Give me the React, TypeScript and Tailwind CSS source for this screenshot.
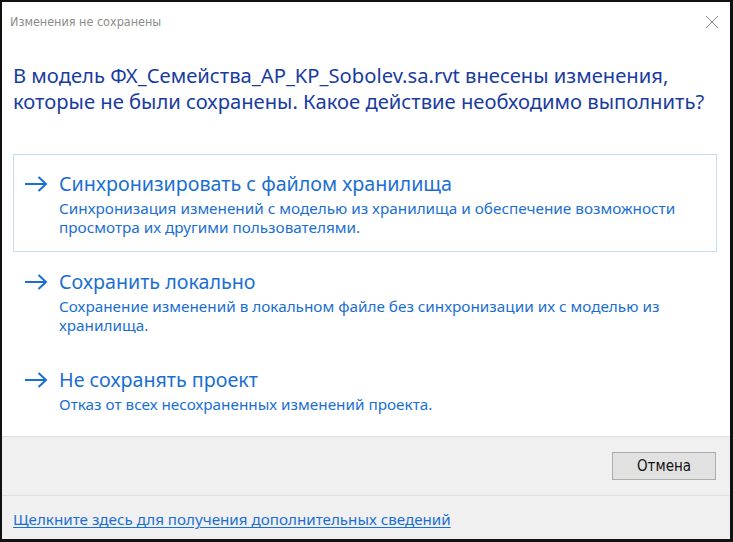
import React from "react";

type Choice = { title: string; desc: string[]; hot?: boolean };

const CHOICES: Choice[] = [
  {
    title: "Синхронизировать с файлом хранилища",
    desc: [
      "Синхронизация изменений с моделью из хранилища и обеспечение возможности",
      "просмотра их другими пользователями.",
    ],
    hot: true,
  },
  {
    title: "Сохранить локально",
    desc: [
      "Сохранение изменений в локальном файле без синхронизации их с моделью из",
      "хранилища.",
    ],
  },
  {
    title: "Не сохранять проект",
    desc: ["Отказ от всех несохраненных изменений проекта."],
  },
];

const NARROW = '"Liberation Sans Narrow", "DejaVu Sans Condensed", "Noto Sans", sans-serif';

function Arrow() {
  return (
    <svg width="24" height="16" viewBox="0 0 24 16" className="shrink-0 text-[#1b6fd2]">
      <path d="M1 8 H22 M14.5 1 L22 8 L14.5 15" fill="none" stroke="currentColor" strokeWidth="2" />
    </svg>
  );
}

function CommandLink({ c }: { c: Choice }) {
  return (
    <div
      className={`flex gap-[11px] border pl-[10px] pr-3 pt-[16px] pb-[14px] ${
        c.hot ? "border-[#c6def3]" : "border-transparent"
      }`}
    >
      <div className="pt-[5px]">
        <Arrow />
      </div>
      <div className="flex flex-col text-[#1b6fd2]">
        <div className="text-[19.7px] leading-[26px]">{c.title}</div>
        <div className="mt-[2px] text-[15.3px] leading-[19px]">
          {c.desc.map((d) => (
            <div key={d}>{d}</div>
          ))}
        </div>
      </div>
    </div>
  );
}

export default function App() {
  return (
    <div
      className="flex h-[542px] w-[733px] flex-col overflow-hidden border-t-2 border-l-2 border-r-[3px] border-b-[3px] border-[#111] bg-white"
      style={{ fontFamily: '"Noto Sans", "Open Sans", sans-serif' }}
    >
      {/* caption */}
      <div className="flex h-[40px] items-center justify-between pl-[8px] pr-[11px]">
        <span className="text-[12.5px] text-[#8c8c8c]" style={{ fontFamily: NARROW }}>
          Изменения не сохранены
        </span>
        <svg width="14" height="14" viewBox="0 0 14 14" className="text-[#8a8a8a]">
          <path d="M1 1 L13 13 M13 1 L1 13" stroke="currentColor" strokeWidth="1" />
        </svg>
      </div>

      {/* main instruction */}
      <div className="whitespace-nowrap px-[11px] pt-[20px] text-[20.2px] leading-[26px] text-[#1a3c9f]">
        <div>В модель ФХ_Семейства_AP_KP_Sobolev.sa.rvt внесены изменения,</div>
        <div>которые не были сохранены. Какое действие необходимо выполнить?</div>
      </div>

      <div className="flex flex-col pl-[11px] pr-[13px] pt-[40px]">
        {CHOICES.map((c) => (
          <CommandLink key={c.title} c={c} />
        ))}
      </div>

      <div className="flex-1" />

      {/* button strip */}
      <div className="flex h-[59px] items-center justify-end border-t border-[#dfdfdf] bg-[#f0f0f0] pr-[14px]">
        <button
          className="h-[28px] w-[104px] border border-[#adadad] bg-[#e1e1e1] text-[15px] text-[#111]"
          style={{ fontFamily: NARROW }}
        >
          Отмена
        </button>
      </div>

      {/* footer link */}
      <div className="flex h-[44px] items-center border-t border-[#dfdfdf] bg-[#f0f0f0] px-[11px] pt-[4px]">
        <a className="text-[15.2px] text-[#1b6fd2] underline underline-offset-2">
          Щелкните здесь для получения дополнительных сведений
        </a>
      </div>
    </div>
  );
}
